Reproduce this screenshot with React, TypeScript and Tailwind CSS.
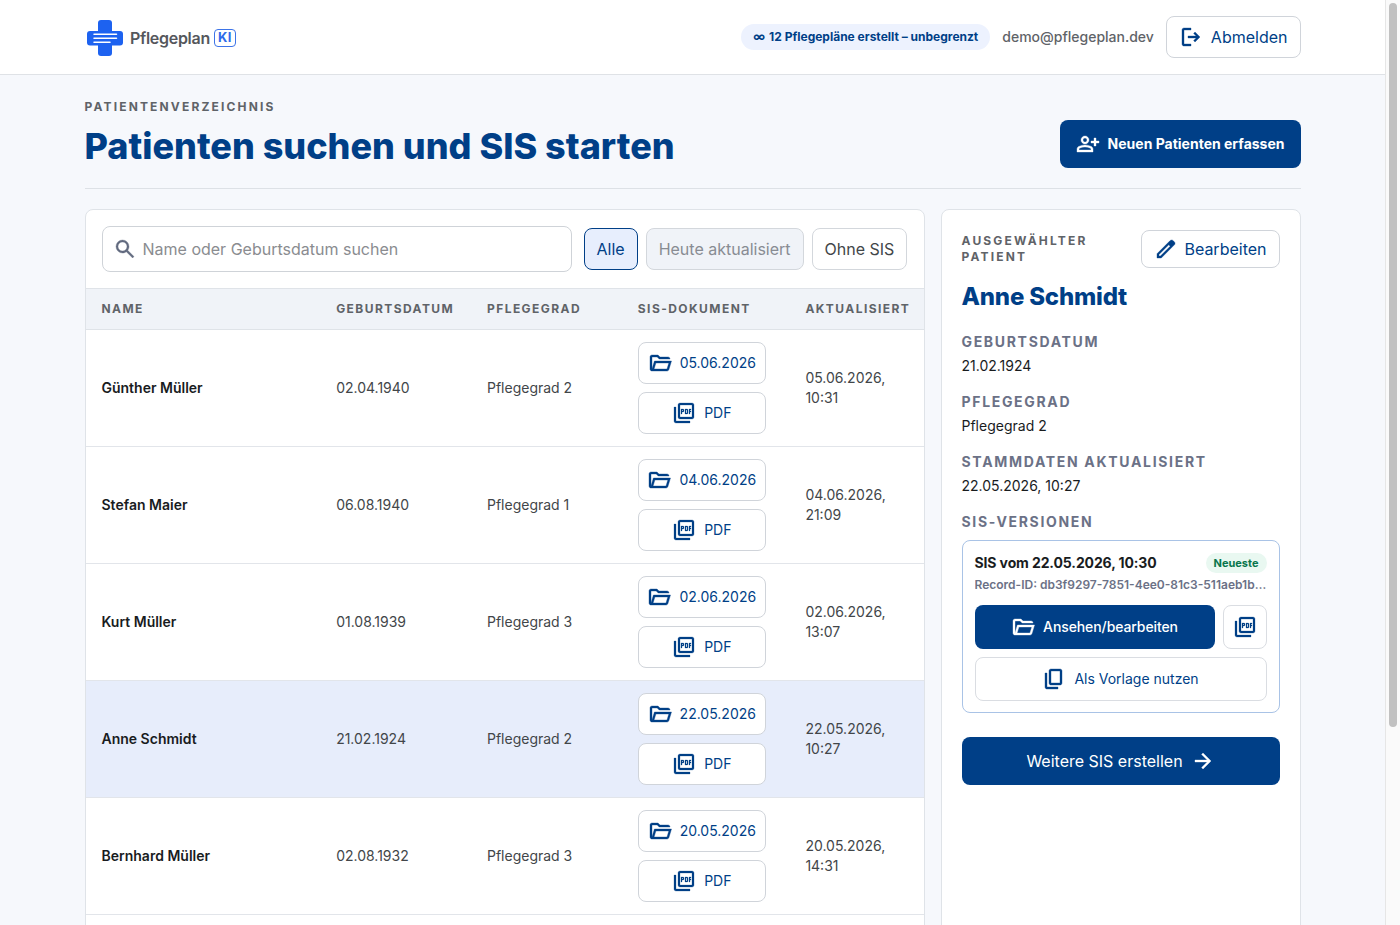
import { useState } from "react";
import { MdOutlinePictureAsPdf } from "react-icons/md";

interface Patient {
  name: string;
  born: string;
  grade: string;
  sis: string;
  updated: string;
  time: string;
}

const PATIENTS: Patient[] = [
  { name: "Günther Müller", born: "02.04.1940", grade: "Pflegegrad 2", sis: "05.06.2026", updated: "05.06.2026,", time: "10:31" },
  { name: "Stefan Maier", born: "06.08.1940", grade: "Pflegegrad 1", sis: "04.06.2026", updated: "04.06.2026,", time: "21:09" },
  { name: "Kurt Müller", born: "01.08.1939", grade: "Pflegegrad 3", sis: "02.06.2026", updated: "02.06.2026,", time: "13:07" },
  { name: "Anne Schmidt", born: "21.02.1924", grade: "Pflegegrad 2", sis: "22.05.2026", updated: "22.05.2026,", time: "10:27" },
  { name: "Bernhard Müller", born: "02.08.1932", grade: "Pflegegrad 3", sis: "20.05.2026", updated: "20.05.2026,", time: "14:31" },
];

const ICONS = {
  folder: "M160-160q-33 0-56.5-23.5T80-240v-480q0-33 23.5-56.5T160-800h240l80 80h320q33 0 56.5 23.5T880-640H447l-80-80H160v480l96-320h684L837-217q-8 26-29.5 41.5T760-160H160Zm84-80h516l72-240H316l-72 240Z",
  logout: "M200-120q-33 0-56.5-23.5T120-200v-560q0-33 23.5-56.5T200-840h280v80H200v560h280v80H200Zm440-160-55-58 102-102H360v-80h327L585-622l55-58 200 200-200 200Z",
  personAdd: "M720-400v-120H600v-80h120v-120h80v120h120v80H800v120h-80Zm-360-80q-66 0-113-47t-47-113q0-66 47-113t113-47q66 0 113 47t47 113q0 66-47 113t-113 47ZM40-160v-112q0-34 17.5-62.5T104-378q62-31 126-46.5T360-440q66 0 130 15.5T616-378q29 15 46.5 43.5T680-272v112H40Zm80-80h480v-32q0-11-5.5-20T580-306q-54-27-109-40.5T360-360q-56 0-111 13.5T140-306q-9 5-14.5 14t-5.5 20v32Zm240-320q33 0 56.5-23.5T440-640q0-33-23.5-56.5T360-720q-33 0-56.5 23.5T280-640q0 33 23.5 56.5T360-560Z",
  search: "M784-120 532-372q-30 24-69 38t-83 14q-109 0-184.5-75.5T120-580q0-109 75.5-184.5T380-840q109 0 184.5 75.5T640-580q0 44-14 83t-38 69l252 252-56 56ZM380-400q75 0 127.5-52.5T560-580q0-75-52.5-127.5T380-760q-75 0-127.5 52.5T200-580q0 75 52.5 127.5T380-400Z",
  edit: "M200-200h57l391-391-57-57-391 391v57Zm-80 80v-170l528-527q12-11 26.5-17t30.5-6q16 0 31 6t26 18l55 56q12 11 17.5 26t5.5 30q0 16-5.5 30.5T817-647L290-120H120Z",
  copy: "M360-240q-33 0-56.5-23.5T280-320v-480q0-33 23.5-56.5T360-880h360q33 0 56.5 23.5T800-800v480q0 33-23.5 56.5T720-240H360Zm0-80h360v-480H360v480ZM200-80q-33 0-56.5-23.5T120-160v-560h80v560h440v80H200Z",
  arrow: "M647-440H160v-80h487L423-744l57-56 320 320-320 320-57-56 224-224Z",
};

export default function App() {
  const [query, setQuery] = useState("");
  const [selected, setSelected] = useState("Anne Schmidt");

  return (
    <div className="flex h-[925px] overflow-hidden bg-[#f6f8fc] font-['Inter',sans-serif] text-base text-[#191c1e]">
      <div className="min-w-0 flex-1">
        <header className="h-[75px] border-b border-[#dfe2e6] bg-white">
          <div className="mx-auto flex h-full max-w-[1280px] items-center justify-between px-8">
            <Logo />
            <div className="flex items-center gap-3">
              <span className="flex h-[26px] items-center gap-1 rounded-full bg-[#edf2fe] px-3 text-xs font-bold text-[#003f87]">
                <span>∞</span>
                <span>12 Pflegepläne erstellt – unbegrenzt</span>
              </span>
              <span className="text-sm font-medium text-[#5f6368]">demo@pflegeplan.dev</span>
              <button className="flex h-[42px] items-center gap-2 rounded-lg border border-[#d0d4da] bg-white px-3 text-[#003f87]">
                <Icon d={ICONS.logout} />
                Abmelden
              </button>
            </div>
          </div>
        </header>

        <main className="mx-auto max-w-[1280px] px-8 pt-6">
          <div className="mb-5 flex h-[90px] items-end justify-between border-b border-[#dde1e6] pb-5">
            <div className="self-start">
              <p className="text-xs leading-4 font-bold tracking-[0.18em] text-[#5f6368] uppercase">Patientenverzeichnis</p>
              <h1 className="mt-1.5 text-[36px] leading-[50px] font-extrabold text-[#003f87]">
                Patienten suchen und SIS starten
              </h1>
            </div>
            <button className="flex h-12 items-center gap-2 rounded-lg bg-[#003f87] px-4 text-sm font-bold text-white">
              <Icon d={ICONS.personAdd} />
              Neuen Patienten erfassen
            </button>
          </div>

          <div className="grid grid-cols-[minmax(0,1fr)_360px] gap-4">
            <section className="h-[900px] overflow-hidden rounded-lg border border-[#dfe3e8] bg-white">
              <div className="flex h-[79px] items-center gap-3 border-b border-[#dfe3e8] px-4">
                <label className="flex h-[46px] w-[470px] items-center gap-1.5 rounded-lg border border-[#cfd3d8] px-2.5">
                  <Icon d={ICONS.search} className="text-[#636b80]" />
                  <input
                    value={query}
                    onChange={(e) => setQuery(e.target.value)}
                    placeholder="Name oder Geburtsdatum suchen"
                    className="min-w-0 flex-1 outline-none placeholder:text-[#8a8c90]"
                  />
                </label>
                <div className="flex gap-2">
                  <button className="h-[42px] rounded-lg border border-[#003f87] bg-[#e7eefd] px-3 text-[#003f87]">Alle</button>
                  <button className="h-[42px] rounded-lg border border-[#d3d7dc] bg-[#f0f3f8] px-3 whitespace-nowrap text-[#888c93]">Heute aktualisiert</button>
                  <button className="h-[42px] rounded-lg border border-[#d3d7dc] bg-white px-3 whitespace-nowrap text-[#424649]">Ohne SIS</button>
                </div>
              </div>

              <table className="w-full table-fixed text-left text-sm leading-5">
                <thead className="bg-[#f0f3f8] text-xs leading-4 tracking-[0.12em] text-[#5f6368] uppercase">
                  <tr className="h-10 border-b border-[#dfe3e8]">
                    <th className="w-[28%] px-4 font-bold">Name</th>
                    <th className="w-[18%] px-4 font-bold">Geburtsdatum</th>
                    <th className="w-[18%] px-4 font-bold">Pflegegrad</th>
                    <th className="w-[20%] px-4 font-bold">SIS-Dokument</th>
                    <th className="w-[16%] pl-4 font-bold">Aktualisiert</th>
                  </tr>
                </thead>
                <tbody>
                  {PATIENTS.map((p) => (
                    <PatientRow key={p.name} patient={p} active={p.name === selected} onSelect={() => setSelected(p.name)} />
                  ))}
                </tbody>
              </table>
            </section>

            <aside className="h-[900px] rounded-lg border border-[#dfe3e8] bg-white p-5">
              <div className="flex items-start justify-between">
                <p className="w-36 pt-[3px] text-xs leading-4 font-bold tracking-[0.18em] text-[#5f6368] uppercase">
                  Ausgewählter Patient
                </p>
                <button className="flex h-[38px] items-center gap-1.5 rounded-lg border border-[#d0d4da] px-3 text-[#003f87]">
                  <Icon d={ICONS.edit} />
                  Bearbeiten
                </button>
              </div>
              <h2 className="mt-[13px] text-2xl leading-8 font-extrabold tracking-[-0.008em] text-[#003f87]">Anne Schmidt</h2>

              <dl className="mt-[19px] space-y-4 text-sm leading-5">
                <Detail label="Geburtsdatum" value="21.02.1924" />
                <Detail label="Pflegegrad" value="Pflegegrad 2" />
                <Detail label="Stammdaten aktualisiert" value="22.05.2026, 10:27" />
              </dl>

              <h3 className="mt-4 text-sm leading-5 font-bold tracking-[0.12em] text-[#6b7186] uppercase">SIS-Versionen</h3>
              <div className="mt-2 rounded-lg border border-[#a9c3e6] px-3 pt-3 pb-[11px]">
                <div className="flex items-center justify-between">
                  <span className="text-sm leading-5 font-bold tracking-[-0.0085em]">SIS vom 22.05.2026, 10:30</span>
                  <span className="rounded-full bg-[#e9f8f1] px-2 text-[11px] leading-5 font-bold text-[#08764d]">Neueste</span>
                </div>
                <p className="mt-0.5 truncate text-xs leading-5 font-semibold text-[#6b7186]">
                  Record-ID: db3f9297-7851-4ee0-81c3-511aeb1b42c7
                </p>
                <div className="mt-2.5 flex gap-2 text-sm">
                  <button className="flex h-11 flex-1 items-center justify-center gap-2 rounded-lg bg-[#003f87] font-medium tracking-[-0.1px] text-white">
                    <Icon d={ICONS.folder} />
                    Ansehen/bearbeiten
                  </button>
                  <button className="flex h-11 w-11 items-center justify-center rounded-lg border border-[#dadde2] text-[#003f87]">
                    <PdfIcon />
                  </button>
                </div>
                <button className="mt-2 flex h-11 w-full items-center justify-center gap-2 rounded-lg border border-[#dadde2] text-sm text-[#003f87]">
                  <Icon d={ICONS.copy} />
                  Als Vorlage nutzen
                </button>
              </div>

              <button className="mt-6 flex h-12 w-full items-center justify-center gap-2 rounded-lg bg-[#003f87] text-white">
                Weitere SIS erstellen
                <Icon d={ICONS.arrow} />
              </button>
            </aside>
          </div>
        </main>
      </div>

      <div className="w-[15px] border-l border-[#e6e6e6] bg-[#fafafa] pt-[3px] pl-[3px]">
        <div className="h-[724px] w-2 rounded-full bg-[#c1c1c1]" />
      </div>
    </div>
  );
}

function PatientRow({ patient, active, onSelect }: { patient: Patient; active: boolean; onSelect: () => void }) {
  return (
    <tr onClick={onSelect} className={`border-b border-[#e2e5ea] text-[#424649] ${active ? "bg-[#e7edfb]" : "bg-white"}`}>
      <td className="px-4 font-semibold text-[#191c1e]">{patient.name}</td>
      <td className="px-4">{patient.born}</td>
      <td className="px-4">{patient.grade}</td>
      <td className="px-4 py-3">
        <div className="flex w-32 flex-col gap-2 text-[#003f87]">
          <button className="flex h-[42px] items-center justify-center gap-2 rounded-lg border border-[#d0d4da] bg-white">
            <Icon d={ICONS.folder} />
            {patient.sis}
          </button>
          <button className="flex h-[42px] items-center justify-center gap-2 rounded-lg border border-[#d0d4da] bg-white">
            <PdfIcon />
            PDF
          </button>
        </div>
      </td>
      <td className="px-4">
        {patient.updated}
        <br />
        {patient.time}
      </td>
    </tr>
  );
}

function Detail({ label, value }: { label: string; value: string }) {
  return (
    <div>
      <dt className="font-bold tracking-[0.12em] text-[#6b7186] uppercase">{label}</dt>
      <dd className="mt-1">{value}</dd>
    </div>
  );
}

function Icon({ d, className = "" }: { d: string; className?: string }) {
  return (
    <svg viewBox="0 -960 960 960" fill="currentColor" stroke="currentColor" strokeWidth="14" className={`size-6 shrink-0 ${className}`}>
      <path d={d} />
    </svg>
  );
}

// The icon's first path is its empty 24px bounding box, so it must stay unstroked.
function PdfIcon() {
  return (
    <MdOutlinePictureAsPdf
      size={24}
      stroke="currentColor"
      strokeWidth={0.25}
      className="shrink-0 [&>path:first-child]:stroke-none"
    />
  );
}

function Logo() {
  return (
    <div className="flex items-center pt-px pl-[2.5px]">
      <svg viewBox="0 0 36 36" className="size-9">
        <rect x="11" width="14" height="36" rx="3" fill="#1d62f0" />
        <rect y="11" width="36" height="14.5" rx="3" fill="#1d62f0" />
        <path d="M7 14.3h22.5M7 18.2h22.5M7 22.3h16" stroke="#fff" strokeWidth="1.5" strokeLinecap="round" />
      </svg>
      <span className="ml-[7px] text-base font-semibold tracking-[-0.018em] text-[#55575c]">Pflegeplan</span>
      <span className="ml-1 flex h-[18px] w-[22px] items-center justify-center rounded border border-[#3d74e8] text-[13px] font-bold tracking-[0.03em] text-[#2f6bea]">
        KI
      </span>
    </div>
  );
}
